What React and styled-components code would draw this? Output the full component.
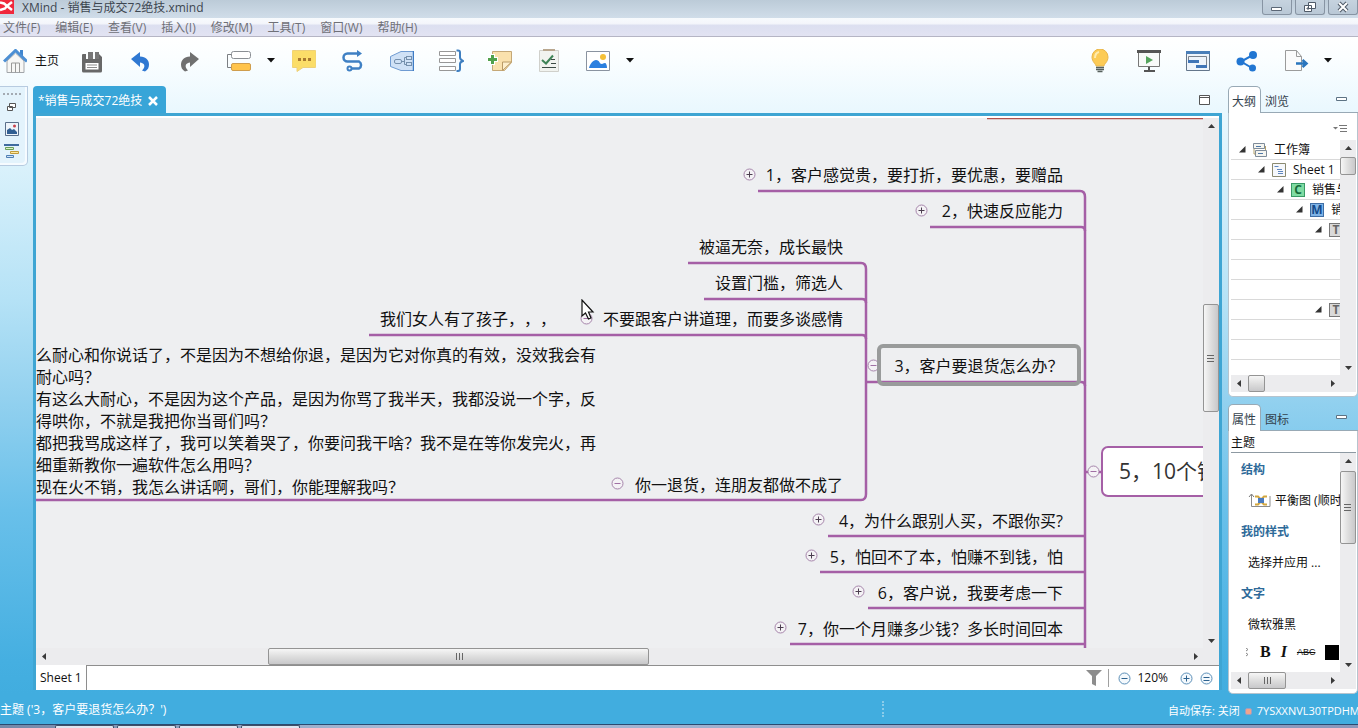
import React from 'react';
import styled, { createGlobalStyle } from 'styled-components';

const GlobalStyle = createGlobalStyle`
  * { box-sizing: border-box; }
  body {
    margin: 0;
    overflow: hidden;
    font-family: 'Open Sans', 'Noto Sans CJK SC', sans-serif;
    font-size: 12px;
    line-height: 16px;
    color: #111;
    text-spacing-trim: space-all;
  }
  button {
    padding: 0;
    border: 0;
    background: none;
    color: inherit;
    font: inherit;
  }
  svg { display: block; flex: none; }
`;

const purple = '#a55fa6';

const Page = styled.div`
  display: flex;
  flex-direction: column;
  height: 100vh;
  overflow: hidden;
  white-space: nowrap;
`;

/* title bar and menu */
const TitleBar = styled.header`
  display: flex;
  height: 18px;
  flex: none;
  background: linear-gradient(#bccbd8, #d0dde9);
  color: #3d4650;
`;
const Title = styled.h1`
  margin: 0 0 0 8px;
  font-size: 12px;
  line-height: 16px;
  font-weight: 400;
  flex: 1;
`;
const WindowButtons = styled.div`
  display: flex;
  gap: 3px;
`;
const WindowButton = styled.button`
  display: flex;
  align-items: center;
  justify-content: center;
  width: 30px;
  height: 15px;
  border: 1px solid #8794a3;
  border-top: 0;
  border-radius: 0 0 3px 3px;
  background: linear-gradient(#c6d3df, #b9c8d6);
`;
const MenuBar = styled.nav`
  display: flex;
  align-items: center;
  gap: 15px;
  height: 19px;
  flex: none;
  padding: 2px 0 0 3px;
  border-bottom: 1px solid #b5b5c4;
  background: linear-gradient(#f7fafd 0, #f4f6fb 30%, #dcdff0 42%, #e2e3f2 100%);
  color: #6f7077;
`;

/* everything under the menu shares one sky gradient */
const Desk = styled.div`
  display: flex;
  flex-direction: column;
  flex: 1;
  min-height: 0;
  background: linear-gradient(#fff 0, #fbfeff 3%, #e8f7fe 12%, #d9f1fb 20%, #b5e2f6 40%, #93d1ef 55%, #69c0ea 72%, #45afe1 95%, #41addf 100%);
`;
const ToolBar = styled.div`
  display: flex;
  align-items: center;
  height: 49px;
  flex: none;
  padding: 0 22px 2px 0;
`;
const Tool = styled.button`
  display: flex;
  align-items: center;
  justify-content: center;
  width: 49px;
  height: 40px;
`;
const HomeTool = styled(Tool)`
  justify-content: flex-start;
  gap: 8px;
  width: 67px;
  padding-left: 3px;
`;
const ToolArrow = styled(Tool)`
  width: 16px;
`;
const Spring = styled.div`
  flex: 1;
`;
const Work = styled.div`
  display: flex;
  flex: 1;
  min-height: 0;
`;
const Rail = styled.aside`
  width: 33px;
  flex: none;
`;
const RailBox = styled.div`
  display: flex;
  flex-direction: column;
  align-items: center;
  width: 28px;
  height: 80px;
  padding-right: 4px;
  border: 1px solid #b7cbe0;
  border-left: 0;
  border-radius: 0 0 5px 0;
  background: #e3f3fc;
  box-shadow: inset -2px -2px 0 #f6fbff;
`;
const RailHandle = styled.div`
  width: 18px;
  height: 8px;
  margin-bottom: 1px;
  border-bottom: 2px dotted #a3aab2;
`;
const RailButton = styled.button`
  display: flex;
  align-items: center;
  justify-content: center;
  width: 22px;
  height: 22px;
`;

/* editor */
const Editor = styled.main`
  display: flex;
  flex-direction: column;
  flex: 1;
  min-width: 0;
`;
const EditorHead = styled.div`
  display: flex;
  align-items: center;
  justify-content: space-between;
  height: 27px;
  flex: none;
  padding-right: 12px;
`;
const EditorTab = styled.div`
  display: flex;
  align-items: center;
  gap: 6px;
  height: 27px;
  padding: 3px 8px 0 5px;
  border-radius: 4px 4px 0 0;
  background: #38a5d8;
  color: #fff;
`;
const EditorFrame = styled.div`
  display: flex;
  flex-direction: column;
  flex: 1;
  min-height: 0;
  margin-bottom: 4px;
  border: 3px solid #3ea5d3;
  border-bottom: 0;
  background: #fff;
  padding-top: 2px;
`;
const CanvasRow = styled.div`
  display: flex;
  flex: 1;
  min-height: 0;
`;
const Canvas = styled.div`
  position: relative;
  flex: 1;
  overflow: hidden;
  background: #eeeff1;
`;
const Branches = styled.svg`
  position: absolute;
  left: 0;
  top: 0;
`;
const Topic = styled.div`
  position: absolute;
  left: ${p => p.$x}px;
  top: ${p => p.$y}px;
  width: ${p => p.$w}px;
  text-align: ${p => p.$align || 'right'};
  font-size: 16px;
  line-height: 22px;
`;
const Selected = styled(Topic)`
  height: 42px;
  padding-top: 7px;
  border: 4px solid #999b9b;
  border-radius: 6px;
  text-align: center;
`;
const MainTopic = styled(Topic)`
  height: 51px;
  padding-left: 16px;
  border: 2px solid ${purple};
  border-radius: 7px;
  background: #fff;
  color: #333;
  font-size: 21px;
  line-height: 47px;
  text-align: left;
`;
const Fold = styled.button`
  position: absolute;
  left: ${p => p.$x}px;
  top: ${p => p.$y}px;
`;
const Pointer = styled.svg`
  position: absolute;
  left: 545px;
  top: 181px;
`;
const SheetBar = styled.div`
  display: flex;
  height: 25px;
  flex: none;
`;
const SheetTab = styled.button`
  padding: 0 4px;
  border-right: 1px solid #8e8e8e;
`;
const SheetTools = styled.div`
  display: flex;
  align-items: center;
  flex: 1;
  justify-content: flex-end;
  padding-right: 6px;
  border-top: 1px solid #8e8e8e;
`;
const Divider = styled.div`
  width: 1px;
  height: 18px;
  margin: 0 9px 0 6px;
  background: #a0a0a0;
`;
const ZoomValue = styled.output`
  margin: 0 12px 0 6px;
`;
const ZoomButton = styled.button`
  margin-right: ${p => p.$gap || 0}px;
`;

/* scroll bars */
const Bar = styled.div`
  display: flex;
  flex-direction: ${p => (p.$across ? 'row' : 'column')};
  flex: none;
  ${p => (p.$across ? 'height: 17px; padding-right: 16px;' : 'width: 16px;')}
  background: #ececee;
`;
const BarArrow = styled.button`
  display: flex;
  align-items: center;
  justify-content: center;
  width: 16px;
  height: 16px;
  flex: none;
`;
const Gap = styled.div`
  flex: ${p => p.$part} 0 0;
`;
const Thumb = styled.div`
  display: flex;
  align-items: center;
  justify-content: center;
  flex: ${p => p.$part} 0 0;
  border: 1px solid #949494;
  border-radius: 2px;
  background: linear-gradient(${p => (p.$across ? 'to bottom' : 'to right')}, #f6f6f6, #dedede 50%, #c8c8ca);
`;

/* right-hand views */
const Views = styled.aside`
  display: flex;
  flex-direction: column;
  gap: 7px;
  width: 136px;
  flex: none;
  padding-left: 6px;
`;
const View = styled.section`
  display: flex;
  flex-direction: column;
  ${p => (p.$grow ? 'flex: 1; min-height: 0;' : 'height: 311px; flex: none;')}
`;
const ViewTabs = styled.div`
  display: flex;
  align-items: center;
  height: 27px;
  flex: none;
  border-bottom: 1px solid #98a9b5;
`;
const ViewTab = styled.button`
  height: 27px;
  padding: 5px 4px 0;
  color: #33414c;
  ${p => p.$on && `
    padding-left: 3px;
    border: 1px solid #98a9b5;
    border-bottom: 0;
    border-radius: 5px 5px 0 0;
    background: #fff;
  `}
`;
const Minimize = styled.button`
  margin: 0 11px 0 auto;
`;
const ViewBody = styled.div`
  display: flex;
  flex-direction: column;
  flex: 1;
  min-height: 0;
  padding: 0 1px 4px 2px;
  border: 1px solid #b6c4ce;
  border-top: 0;
  border-radius: 0 0 5px 5px;
  background: #fff;
`;
const ViewMenu = styled.div`
  display: flex;
  align-items: center;
  justify-content: flex-end;
  height: 27px;
  flex: none;
  padding: 4px 8px 0 0;
`;
const Scroller = styled.div`
  display: flex;
  flex: 1;
  min-height: 0;
`;
const Tree = styled.ul`
  flex: 1;
  margin: 0;
  padding: 0;
  overflow: hidden;
  list-style: none;
`;
const TreeRow = styled.li`
  display: flex;
  align-items: center;
  gap: 7px;
  height: 20px;
  padding-left: ${p => 8 + p.$level * 19}px;
  border-bottom: 1px solid #d9d9d9;
`;
const Badge = styled.span`
  display: flex;
  align-items: center;
  justify-content: center;
  width: 14px;
  height: 14px;
  flex: none;
  border: 1px solid ${p => p.$edge};
  background: ${p => p.$fill};
  color: ${p => p.$ink};
  font-size: 12px;
  font-weight: 700;
  line-height: 12px;
`;
const PropTitle = styled.div`
  height: 22px;
  flex: none;
  padding-top: 4px;
  border-bottom: 1px solid #8d99a2;
`;
const Props = styled.div`
  flex: 1;
  padding-top: 1px;
  overflow: hidden;
`;
const PropHead = styled.h2`
  margin: 0;
  padding-left: 10px;
  color: #2e6a99;
  font-size: 12px;
  font-weight: 700;
  line-height: 31px;
`;
const PropValue = styled.button`
  display: flex;
  align-items: center;
  gap: 4px;
  height: 31px;
  padding-left: 17px;
`;
const Formats = styled.div`
  display: flex;
  align-items: center;
  gap: 10px;
  height: 24px;
  padding-left: 14px;
`;
const Format = styled.button`
  font-family: 'Liberation Serif', serif;
  font-size: 16px;
  font-weight: 700;
  font-style: ${p => (p.$italic ? 'italic' : 'normal')};
`;
const Strike = styled.button`
  font-family: 'Liberation Sans', sans-serif;
  font-size: 9px;
  text-decoration: line-through;
`;
const Swatch = styled.button`
  width: 14px;
  height: 15px;
  flex: none;
  background: #000;
`;

/* bottom */
const Status = styled.footer`
  display: flex;
  align-items: center;
  height: 30px;
  flex: none;
  background: #41addf;
  color: #fff;
`;
const StatusLeft = styled.div`
  flex: 1;
  padding-top: 1px;
`;
const StatusGrip = styled.div`
  width: 2px;
  height: 16px;
  border-left: 2px dotted #8accea;
`;
const StatusRight = styled.div`
  display: flex;
  align-items: center;
  gap: 5px;
  width: 474px;
  padding: 4px 0 0 284px;
  overflow: hidden;
  font-size: 11px;
`;
const Dot = styled.span`
  width: 7px;
  height: 7px;
  flex: none;
  border: 1px solid #9a9fc4;
  border-radius: 2px;
  background: #f0a48c;
`;
const TaskBar = styled.div`
  display: flex;
  gap: 3px;
  height: 4px;
  flex: none;
  padding-left: 55px;
  border-top: 1px solid #2c4a70;
  background: linear-gradient(to right, #7488a8, #a9bcd8 30%, #8a97bb);
`;
const Task = styled.div`
  width: 59px;
  border: 1px solid #3f4f66;
  border-bottom: 0;
  border-radius: 2px 2px 0 0;
  background: #dfe7f2;
`;

const Icon = ({ w = 24, h = 24, children }) => (
  <svg width={w} height={h} viewBox={`0 0 ${w} ${h}`} fill="none" aria-hidden="true">{children}</svg>
);

const Arrow = ({ dir }) => {
  const shapes = {
    up: 'M0 5 L3.500 1 L7 5Z',
    down: 'M0 2 L3.500 6 L7 2Z',
    left: 'M5 0 L1 3.500 L5 7Z',
    right: 'M2 0 L6 3.500 L2 7Z',
  };
  return <Icon w={7} h={7}><path d={shapes[dir]} fill="#3a3a3a" /></Icon>;
};

const Caret = () => <Icon w={8} h={5}><path d="M0 0h8L4 4.500z" fill="#111" /></Icon>;

const ScrollBar = ({ across, parts, grip }) => (
  <Bar $across={across}>
    <BarArrow aria-label="scroll back"><Arrow dir={across ? 'left' : 'up'} /></BarArrow>
    <Gap $part={parts[0]} />
    <Thumb $across={across} $part={parts[1]}>
      {grip && (
        <Icon w={8} h={8}>
          <path d={across ? 'M1.500 0v7M4.500 0v7M7.500 0v7' : 'M0 1.500h7M0 4.500h7M0 7.500h7'} stroke="#666" />
        </Icon>
      )}
    </Thumb>
    <Gap $part={parts[2]} />
    <BarArrow aria-label="scroll on"><Arrow dir={across ? 'right' : 'down'} /></BarArrow>
  </Bar>
);

const icons = {
  home: (
    <Icon>
      <path d="M4 12v11.500h17V12L12.500 4z" fill="#f7f7f5" stroke="#a2a6aa" />
      <path d="M8.500 23.500V14h8v9.500M12.500 14v9.500" stroke="#9a9a98" />
      <path d="M17 1h3v8l-3-3z" fill="#3f86cf" />
      <path d="M1 12.500L12.500 1.500 24 12.500" stroke="#4c8fd4" strokeWidth="3" />
    </Icon>
  ),
  save: (
    <Icon>
      <path d="M2 6q0-1 1-1h3v6h13V5l3 3v14q0 1.500-1.500 1.500h-17Q2 23.500 2 22z" fill="#686868" />
      <path d="M2 10h20v4H2z" fill="#686868" />
      <path d="M8 3h5v7H8zM15 3h4v7h-4z" fill="#777" />
      <path d="M5.500 14h13v6.500h-13z" fill="#fff" />
      <path d="M7 16h10M7 18.500h10" stroke="#8b8b8b" />
    </Icon>
  ),
  undo: (
    <Icon>
      <path d="M2 10L11 3v4.500c6 0 9 4 9 8 0 3-1 5-4 7l-3-1c2-2 3-4 2-6-1-1-2-2-4-2V18z" fill="#2f78d2" />
    </Icon>
  ),
  redo: (
    <Icon>
      <path d="M21 10L12 3v4.500c-6 0-9 4-9 8 0 3 1 5 4 7l3-1c-2-2-3-4-2-6 1-1 2-2 4-2V18z" fill="#707070" />
    </Icon>
  ),
  topic: (
    <Icon w={26}>
      <path d="M6 5.500H1.500v13H6" stroke="#7b7f83" />
      <rect x="5.500" y="2.500" width="19" height="7" rx="2" fill="#fff" stroke="#8b8f94" />
      <rect x="5.500" y="14.500" width="19" height="7" rx="1.500" fill="#ffc44c" stroke="#cf9d4d" />
    </Icon>
  ),
  comment: (
    <Icon>
      <path d="M1 1.500h22q1 0 1 1v15q0 1-1 1H11l-6 4v-4H1q-1 0-1-1v-15q0-1 1-1z" fill="#fbdd68" stroke="#edd07a" />
      <path d="M6 9h3v3H6zM11 9h3v3h-3zM16 9h3v3h-3z" fill="#a8792f" />
    </Icon>
  ),
  relation: (
    <Icon>
      <path d="M18 4.500H6.500a4 4 0 0 0 0 8H18a4 4 0 0 1 0 7H10" stroke="#3f80c4" strokeWidth="2.500" />
      <path d="M16 1l5 3.500L16 8z" fill="#3f80c4" />
      <circle cx="8.500" cy="19.500" r="2" fill="#fff" stroke="#3f80c4" strokeWidth="2" />
    </Icon>
  ),
  boundary: (
    <Icon>
      <path d="M.5 7.500L11 2.500h12.500v19H11L.5 17.500z" fill="#cfe1f6" stroke="#6f9bd2" />
      <path d="M23.500 2v20" stroke="#3f7cc4" strokeWidth="1.500" />
      <rect x="4.500" y="10.500" width="7" height="4" rx="1.500" stroke="#7590ad" />
      <path d="M11.500 12.500H14M16.500 8.500h-2v7h2" stroke="#7590ad" />
      <rect x="16.500" y="7.500" width="5" height="3" stroke="#7590ad" />
      <rect x="16.500" y="13.500" width="5" height="3" stroke="#7590ad" />
    </Icon>
  ),
  summary: (
    <Icon w={26}>
      <path d="M1.500 2.500h16v4h-16zM1.500 9.500h16v4h-16zM1.500 17.500h16v4h-16z" fill="#fff" stroke="#979797" />
      <path d="M18.500 1.500h1.500q2 0 2 2v5q0 2 3 3.500-3 1-3 3v5q0 2-2 2h-1.500" stroke="#3f7fc0" strokeWidth="2" />
    </Icon>
  ),
  note: (
    <Icon w={26}>
      <path d="M5.500 2.500h19v11l-7 8h-12z" fill="#fae1ad" stroke="#c5a877" />
      <path d="M15.500 21.500v-8.500h9z" fill="#fdeecb" stroke="#b99a66" />
      <path d="M5.500 5v11M0 10.500h11" stroke="#fff" strokeWidth="5" />
      <path d="M5.500 6v9M1 10.500h9" stroke="#51a14c" strokeWidth="3" />
    </Icon>
  ),
  task: (
    <Icon>
      <path d="M2.500 1.500h19v21h-19z" fill="#f1f3ef" stroke="#d0d0cb" />
      <path d="M6 0h12v2H6z" fill="#b9a78f" />
      <path d="M5 11l4 3.500L16 6.500" stroke="#3f8457" strokeWidth="2" />
      <path d="M14 10.500h4M14 14.500h5M5 18.500h14" stroke="#3c4b44" />
    </Icon>
  ),
  image: (
    <Icon>
      <path d="M.5 2.500h23v19H.5z" fill="#fff" stroke="#8a93a0" />
      <path d="M3 19c1-4 4-8 7-8 4 0 3 4 6 4 1 0 1-1 3-1 1 0 2 2 2 5z" fill="#2b7fdf" />
      <circle cx="17" cy="8" r="3" fill="#f5c037" />
    </Icon>
  ),
  bulb: (
    <Icon>
      <path d="M8 17c0-2-4-4-4-9a8 8 0 0 1 16 0c0 5-4 7-4 9z" fill="#fccb56" stroke="#e9b64c" />
      <path d="M7 9q0-5 4-6" stroke="#ffecae" strokeWidth="2" />
      <path d="M8 18.500h8M8 20.500h8M9.500 22.500h5" stroke="#56605c" strokeWidth="1.500" />
    </Icon>
  ),
  present: (
    <Icon>
      <path d="M1.500 3.500h21v14h-21z" fill="#f8faf9" stroke="#777" />
      <path d="M0 1h24v3H0z" fill="#555" />
      <path d="M9 7l7 4-7 4z" fill="#55a45d" />
      <path d="M12 18v4M7 22h11" stroke="#555" strokeWidth="2" />
    </Icon>
  ),
  gantt: (
    <Icon w={26}>
      <path d="M1.500 2.500h23v19h-23z" fill="#eef4fb" stroke="#64768b" />
      <path d="M1 2h24v3H1z" fill="#4a7fb9" />
      <path d="M3.500 12V7.500h18V16" stroke="#7a828c" />
      <path d="M3 11h11v3H3zM11 16h11v3H11z" fill="#3f74b6" />
    </Icon>
  ),
  share: (
    <Icon>
      <path d="M18 6L6 12.500 17 19" stroke="#2176d2" strokeWidth="2" />
      <circle cx="18" cy="6" r="4" fill="#2176d2" />
      <circle cx="5.500" cy="12.500" r="4" fill="#2176d2" />
      <circle cx="17.500" cy="19" r="3.500" fill="#2176d2" />
    </Icon>
  ),
  exportFile: (
    <Icon w={26}>
      <path d="M2.500 1.500h11l5 6v14h-16z" fill="#fbfbfb" stroke="#9b9b9b" />
      <path d="M13.500 1.500v6h5" stroke="#9b9b9b" />
      <path d="M13 14.500h9M19.500 11l4 3.500-4 3.500" stroke="#2a75bd" strokeWidth="2.500" />
    </Icon>
  ),
};

const leftTools = [
  ['save', '保存'], ['undo', '撤销'], ['redo', '重做'], ['topic', '主题'], null,
  ['comment', '批注'], ['relation', '联系'], ['boundary', '外框'], ['summary', '概要'],
  ['note', '备注'], ['task', '任务'], ['image', '图片'], null,
];
const rightTools = [
  ['bulb', '头脑风暴'], ['present', '演示'], ['gantt', '甘特图'], ['share', '分享'], ['exportFile', '导出'], null,
];

const ToolList = ({ tools }) => tools.map((t, idx) => (
  t
    ? <Tool key={idx} aria-label={t[1]}>{icons[t[0]]}</Tool>
    : <ToolArrow key={idx} aria-label="更多"><Caret /></ToolArrow>
));

const menus = ['文件(F)', '编辑(E)', '查看(V)', '插入(I)', '修改(M)', '工具(T)', '窗口(W)', '帮助(H)'];

// x and y are on the map plane, w is the width of the text box
const topics = [
  { x: 707, y: 46, w: 320, text: '1，客户感觉贵，要打折，要优惠，要赠品' },
  { x: 887, y: 82, w: 140, text: '2，快速反应能力' },
  { x: 647, y: 118, w: 160, text: '被逼无奈，成长最快' },
  { x: 647, y: 154, w: 160, text: '设置门槛，筛选人' },
  { x: 547, y: 190, w: 260, text: '不要跟客户讲道理，而要多谈感情' },
  { x: 344, y: 190, w: 190, text: '我们女人有了孩子，，，', align: 'left' },
  { x: 587, y: 356, w: 220, text: '你一退货，连朋友都做不成了' },
  { x: 787, y: 392, w: 240, text: '4，为什么跟别人买，不跟你买?' },
  { x: 787, y: 428, w: 240, text: '5，怕回不了本，怕赚不到钱，怕' },
  { x: 827, y: 464, w: 200, text: '6，客户说，我要考虑一下' },
  { x: 747, y: 500, w: 280, text: '7，你一个月赚多少钱？多长时间回本' },
];

const speech = [
  '这么耐心和你说话了，不是因为不想给你退，是因为它对你真的有效，没效我会有',
  '大耐心吗？',
  '我有这么大耐心，不是因为这个产品，是因为你骂了我半天，我都没说一个字，反',
  '还得哄你，不就是我把你当哥们吗？',
  '你都把我骂成这样了，我可以笑着哭了，你要问我干啥？我不是在等你发完火，再',
  '仔细重新教你一遍软件怎么用吗？',
  '你现在火不销，我怎么讲话啊，哥们，你能理解我吗？',
];

const folds = [
  [714, 57, true], [886, 93, true], [551, 201, false], [582, 366, false], [838, 248, false],
  [783, 402, true], [776, 438, true], [823, 474, true], [745, 510, true], [1058, 354, false],
];

const FoldMark = ({ plus }) => (
  <Icon w={13} h={13}>
    <circle cx="6.500" cy="6.500" r="5.500" fill="#f4f2f5" stroke="#a685ab" />
    <path d={plus ? 'M3.500 6.500h6M6.500 3.500v6' : 'M3.500 6.500h6'} stroke={plus ? '#4c3f50' : '#a070a4'} />
  </Icon>
);

const MindMap = () => (
  <Canvas>
    <Branches width="1400" height="900" fill="none" stroke={purple} strokeWidth="2.500">
      <path d="M951 0.500H1300" stroke="#b0504c" strokeWidth="1.500" />
      <path d="M722 73H1044Q1049 73 1049 79V900" />
      <path d="M894 109H1045Q1049 109 1049 113M830 264H1045Q1049 264 1049 268" />
      <path d="M792 418H1049M784 454H1049M832 490H1049M754 526H1049" />
      <path d="M652 145H825Q830 145 830 151V376Q830 382 825 382H0" />
      <path d="M668 181H826Q830 181 830 185M333 217H826Q830 217 830 221" />
      <path d="M1049 354H1066" />
    </Branches>
    {topics.map(t => (
      <Topic key={t.text} $x={t.x} $y={t.y} $w={t.w} $align={t.align}>{t.text}</Topic>
    ))}
    <Topic $x={-16} $y={226} $w={600} $align="left">
      {speech.map(line => <div key={line}>{line}</div>)}
    </Topic>
    <MainTopic $x={1065} $y={328} $w={260}>5，10个销</MainTopic>
    {folds.map(([x, y, plus]) => (
      <Fold key={`${x}-${y}`} $x={x - 7} $y={y - 7} aria-label={plus ? '展开' : '收起'}>
        <FoldMark plus={plus} />
      </Fold>
    ))}
    <Selected $x={841} $y={226} $w={204}>3，客户要退货怎么办？</Selected>
    <Pointer width="14" height="22" viewBox="0 0 14 22" aria-hidden="true">
      <path d="M1 1v16l3.500-3 3 6 2.500-1-2.500-6H12z" fill="#fff" stroke="#111" strokeWidth="1.200" />
    </Pointer>
  </Canvas>
);

const BookIcon = () => (
  <Icon w={14} h={14}>
    <path d="M.5 .5h11v5H.5zM2.500 7.500h11v6h-11z" fill="#f5f5f0" stroke="#7f8c9a" />
    <path d="M3 3.500h5M5 10.500h5" stroke="#4f78a8" />
    <path d="M12.500 3v4M1 6v5h1.500" stroke="#b3a06a" />
  </Icon>
);
const SheetIcon = () => (
  <Icon w={14} h={14}>
    <path d="M.5 .5h13v13H.5z" fill="#f6f8fb" stroke="#8b8a70" />
    <path d="M2.500 3.500h4M5 6.500h5M6 8.500h5M6 10.500h5" stroke="#5f86bd" />
  </Icon>
);

const tree = [
  { level: 0, icon: <BookIcon />, text: '工作簿' },
  { level: 1, icon: <SheetIcon />, text: 'Sheet 1' },
  { level: 2, icon: <Badge $edge="#3a9a66" $fill="#7fdca3" $ink="#156b3c">C</Badge>, text: '销售与' },
  { level: 3, icon: <Badge $edge="#3f6ea5" $fill="#7fb3e6" $ink="#134a8a">M</Badge>, text: '销' },
  { level: 4, icon: <Badge $edge="#777" $fill="#d9d9d9" $ink="#666">T</Badge> },
  null, null, null,
  { level: 4, icon: <Badge $edge="#777" $fill="#d9d9d9" $ink="#666">T</Badge> },
  null, null,
];

const ViewHead = ({ names }) => (
  <ViewTabs>
    <ViewTab $on>{names[0]}</ViewTab>
    <ViewTab>{names[1]}</ViewTab>
    <Minimize aria-label="最小化">
      <Icon w={11} h={5}><path d="M.5 .5h10v3H.5z" fill="#fff" stroke="#5d7384" /></Icon>
    </Minimize>
  </ViewTabs>
);

const Outline = () => (
  <View>
    <ViewHead names={['大纲', '浏览']} />
    <ViewBody>
      <ViewMenu>
        <button aria-label="视图菜单">
          <Icon w={15} h={9}>
            <path d="M0 3h5L2.500 5.500z" fill="#777" />
            <path d="M6 1.500h8M7 4.500h7M7 7.500h7" stroke="#777" />
          </Icon>
        </button>
      </ViewMenu>
      <Scroller>
        <Tree>
          {tree.map((row, idx) => (
            <TreeRow key={idx} $level={row ? row.level : 0}>
              {row && <Icon w={7} h={7}><path d="M6.500 0v6.500H0z" fill="#333" /></Icon>}
              {row && row.icon}
              {row && row.text}
            </TreeRow>
          ))}
        </Tree>
        <ScrollBar parts={[1, 16, 187]} />
      </Scroller>
      <ScrollBar across parts={[1, 16, 61]} />
    </ViewBody>
  </View>
);

const Properties = () => (
  <View $grow>
    <ViewHead names={['属性', '图标']} />
    <ViewBody>
      <PropTitle>主题</PropTitle>
      <Scroller>
        <Props>
          <PropHead>结构</PropHead>
          <PropValue>
            <Icon w={23} h={16}>
              <path d="M3.500 1.500v12H22V3" stroke="#8b8b8b" />
              <path d="M1 4l2.500-3L6 4" stroke="#777" />
              <path d="M7 3.500h3l3 3 3-3h3M7 11.500h3l3-3 3 3h3" stroke="#d2a63e" strokeWidth="2" />
              <rect x="10" y="5" width="6" height="5" fill="#4a7bc0" />
            </Icon>
            平衡图 (顺时
          </PropValue>
          <PropHead>我的样式</PropHead>
          <PropValue>选择并应用 ...</PropValue>
          <PropHead>文字</PropHead>
          <PropValue>微软雅黑</PropValue>
          <Formats>
            <Icon w={5} h={9}><path d="M1 0l2 1.500L1 3M1 5l2 1.500L1 8" stroke="#888" /></Icon>
            <Format aria-label="粗体">B</Format>
            <Format $italic aria-label="斜体">I</Format>
            <Strike aria-label="删除线">ABC</Strike>
            <Swatch aria-label="文字颜色" />
          </Formats>
        </Props>
        <ScrollBar parts={[2, 72, 114]} grip />
      </Scroller>
      <ScrollBar across parts={[1, 37, 40]} grip />
    </ViewBody>
  </View>
);

const ZoomIcon = ({ d }) => (
  <Icon w={13} h={13}>
    <circle cx="6.500" cy="6.500" r="5.500" fill="#f4f9fd" stroke="#5c8fb8" />
    <path d={d} stroke="#2d628f" />
  </Icon>
);

class App extends React.Component {
  render() {
    return (
      <Page>
        <GlobalStyle />
        <TitleBar>
          <Icon w={14} h={14}>
            <path d="M0 0h14v14H0z" fill="#f0283c" />
            <path d="M0 2.500l4 1 3 2.500 5-4M0 10l5-1.500 2-2.500 5 4" stroke="#fff" strokeWidth="2.500" />
          </Icon>
          <Title>XMind - 销售与成交72绝技.xmind</Title>
          <WindowButtons>
            <WindowButton aria-label="最小化">
              <Icon w={12} h={12}><path d="M.5 6.500h10v3H.5z" fill="#fff" stroke="#5b6776" /></Icon>
            </WindowButton>
            <WindowButton aria-label="还原">
              <Icon w={12} h={12}><path d="M4.500 1.500h7v6h-7zM.5 4.500h7v6h-7zM3 7h2v1H3z" fill="#fff" stroke="#4f5a68" /></Icon>
            </WindowButton>
            <WindowButton aria-label="关闭">
              <Icon w={12} h={12}>
                <path d="M2 2l8 8M10 2l-8 8" stroke="#4f5a68" strokeWidth="4" />
                <path d="M2 2l8 8M10 2l-8 8" stroke="#fff" strokeWidth="2" />
              </Icon>
            </WindowButton>
          </WindowButtons>
        </TitleBar>
        <MenuBar>
          {menus.map(m => <button key={m}>{m}</button>)}
        </MenuBar>
        <Desk>
          <ToolBar>
            <HomeTool>{icons.home}主页</HomeTool>
            <ToolList tools={leftTools} />
            <Spring />
            <ToolList tools={rightTools} />
          </ToolBar>
          <Work>
            <Rail>
              <RailBox>
                <RailHandle />
                <RailButton aria-label="还原视图">
                  <Icon w={9} h={9}>
                    <path d="M2.500 .5h6v4h-6zM.5 3.500h5v4h-5z" fill="#fff" stroke="#555" />
                  </Icon>
                </RailButton>
                <RailButton aria-label="图片库">
                  <Icon w={14} h={14}>
                    <path d="M.5 .5h13v13H.5z" fill="#eef4fa" stroke="#5a6f8a" />
                    <path d="M2 12V8l3-2 2 2 2-1 3 3v2z" fill="#315f92" />
                    <circle cx="9.500" cy="4" r="1.500" fill="#c8434d" />
                  </Icon>
                </RailButton>
                <RailButton aria-label="任务视图">
                  <Icon w={16} h={15}>
                    <path d="M0 1h15" stroke="#3f6ca0" strokeWidth="2" />
                    <path d="M1.500 3.500h8v2h-8z" fill="#dff0c8" stroke="#68a058" />
                    <path d="M6.500 7.500h8v2h-8z" fill="#ffe9a0" stroke="#c09a3a" />
                    <path d="M2.500 11.500h7v2h-7z" fill="#cfe2f5" stroke="#4f7fb5" />
                  </Icon>
                </RailButton>
              </RailBox>
            </Rail>
            <Editor>
              <EditorHead>
                <EditorTab>
                  *销售与成交72绝技
                  <button aria-label="关闭标签">
                    <Icon w={10} h={10}><path d="M1 1l8 8M9 1L1 9" stroke="#fff" strokeWidth="2.500" /></Icon>
                  </button>
                </EditorTab>
                <button aria-label="最大化">
                  <Icon w={11} h={10}><path d="M.5 .5h10v9H.5zM.5 2.500h10" fill="#fff" stroke="#555" /></Icon>
                </button>
              </EditorHead>
              <EditorFrame>
                <CanvasRow>
                  <MindMap />
                  <ScrollBar parts={[170, 106, 220]} grip />
                </CanvasRow>
                <ScrollBar across parts={[216, 379, 538]} grip />
                <SheetBar>
                  <SheetTab>Sheet 1</SheetTab>
                  <SheetTools>
                    <button aria-label="筛选">
                      <Icon w={16} h={16}><path d="M0 0h16l-6 6v10l-4-2V6z" fill="#8d8d8d" /></Icon>
                    </button>
                    <Divider />
                    <ZoomButton aria-label="缩小"><ZoomIcon d="M3.500 6.500h6" /></ZoomButton>
                    <ZoomValue>120%</ZoomValue>
                    <ZoomButton $gap={7} aria-label="放大"><ZoomIcon d="M3.500 6.500h6M6.500 3.500v6" /></ZoomButton>
                    <ZoomButton aria-label="实际大小"><ZoomIcon d="M3.500 5.500h6M3.500 8.500h6" /></ZoomButton>
                  </SheetTools>
                </SheetBar>
              </EditorFrame>
            </Editor>
            <Views>
              <Outline />
              <Properties />
            </Views>
          </Work>
        </Desk>
        <Status>
          <StatusLeft>主题 ('3，客户要退货怎么办？')</StatusLeft>
          <StatusGrip />
          <StatusRight>
            自动保存: 关闭 <Dot /> 7YSXXNVL30TPDHM
          </StatusRight>
        </Status>
        <TaskBar>
          <Task /><Task /><Task /><Task />
        </TaskBar>
      </Page>
    );
  }
}

export default App;
